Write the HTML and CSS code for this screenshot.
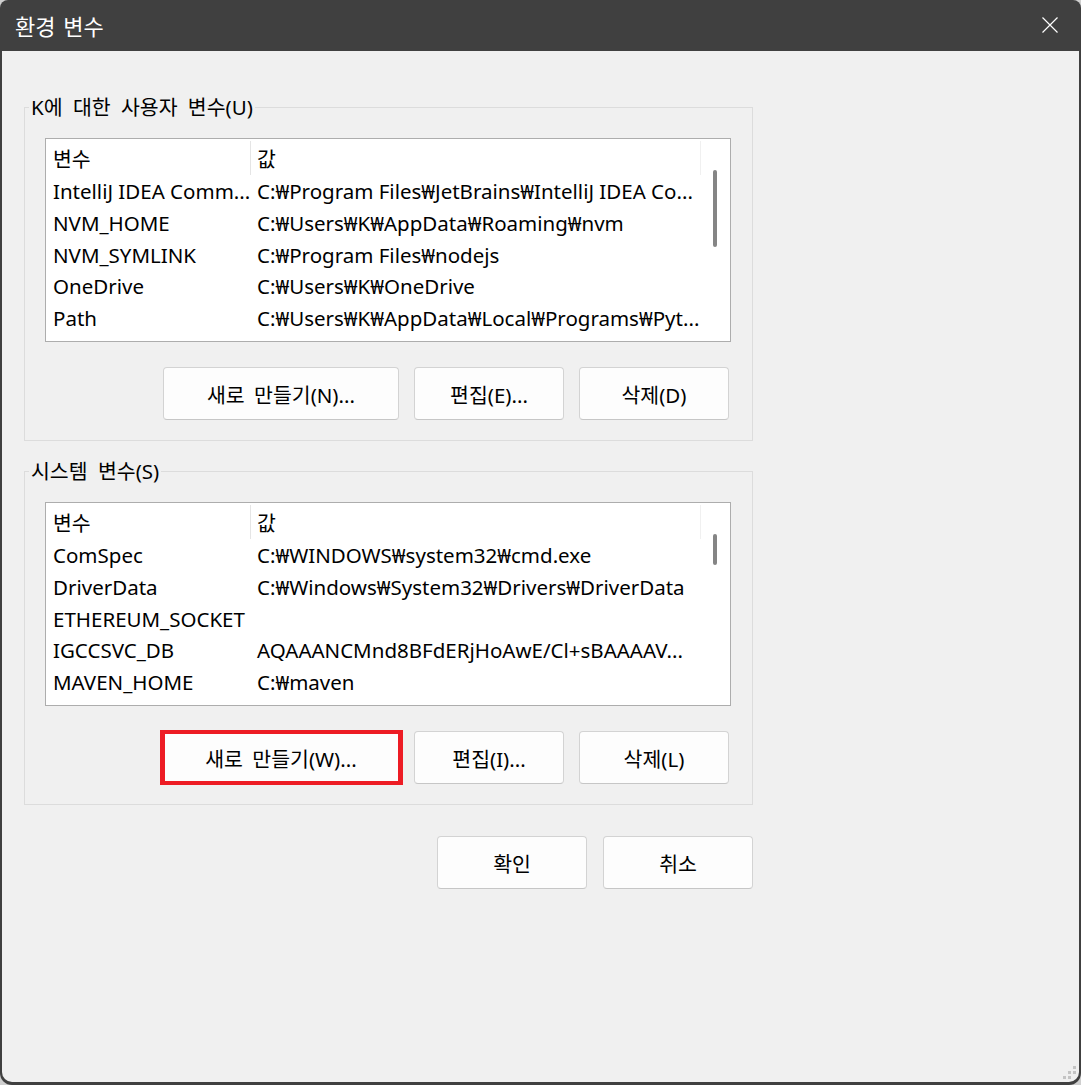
FILE: index.html
```html
<!DOCTYPE html>
<html lang="ko">
<head>
<meta charset="utf-8">
<title>환경 변수</title>
<link rel="stylesheet" href="styles.css">
</head>
<body>
<div class="window">
  <div class="titlebar">
    <span class="title">환경 변수</span>
    <span class="close">
      <svg width="16" height="16" viewBox="0 0 16 16"><path d="M0.5 0.5 L15.5 15.5 M15.5 0.5 L0.5 15.5" stroke="#ffffff" stroke-width="1.2" fill="none"/></svg>
    </span>
  </div>
  <div class="content">
    <fieldset class="group">
      <legend>K에 대한 사용자 변수(U)</legend>
      <div class="listbox">
        <div class="table">
          <div class="row head"><div class="c1">변수</div><div class="c2">값</div></div>
          <div class="row"><div class="c1">IntelliJ IDEA Comm...</div><div class="c2">C:₩Program Files₩JetBrains₩IntelliJ IDEA Co...</div></div>
          <div class="row"><div class="c1">NVM_HOME</div><div class="c2">C:₩Users₩K₩AppData₩Roaming₩nvm</div></div>
          <div class="row"><div class="c1">NVM_SYMLINK</div><div class="c2">C:₩Program Files₩nodejs</div></div>
          <div class="row"><div class="c1">OneDrive</div><div class="c2">C:₩Users₩K₩OneDrive</div></div>
          <div class="row"><div class="c1">Path</div><div class="c2">C:₩Users₩K₩AppData₩Local₩Programs₩Pyt...</div></div>
        </div>
        <div class="scrollbar"><div class="thumb thumb-user"></div></div>
      </div>
      <div class="buttons">
        <button class="btn btn-wide">새로 만들기(N)...</button>
        <button class="btn">편집(E)...</button>
        <button class="btn">삭제(D)</button>
      </div>
    </fieldset>

    <fieldset class="group group-system">
      <legend>시스템 변수(S)</legend>
      <div class="listbox">
        <div class="table">
          <div class="row head"><div class="c1">변수</div><div class="c2">값</div></div>
          <div class="row"><div class="c1">ComSpec</div><div class="c2">C:₩WINDOWS₩system32₩cmd.exe</div></div>
          <div class="row"><div class="c1">DriverData</div><div class="c2">C:₩Windows₩System32₩Drivers₩DriverData</div></div>
          <div class="row"><div class="c1">ETHEREUM_SOCKET</div><div class="c2"></div></div>
          <div class="row"><div class="c1">IGCCSVC_DB</div><div class="c2">AQAAANCMnd8BFdERjHoAwE/Cl+sBAAAAV...</div></div>
          <div class="row"><div class="c1">MAVEN_HOME</div><div class="c2">C:₩maven</div></div>
        </div>
        <div class="scrollbar"><div class="thumb thumb-system"></div></div>
      </div>
      <div class="buttons">
        <button class="btn btn-wide btn-marked">새로 만들기(W)...</button>
        <button class="btn">편집(I)...</button>
        <button class="btn">삭제(L)</button>
      </div>
    </fieldset>

    <div class="dialog-buttons">
      <button class="btn">확인</button>
      <button class="btn">취소</button>
    </div>

    <svg class="grip" width="14" height="14" viewBox="0 0 14 14">
      <rect x="10" y="0" width="3" height="3" fill="#c4c4c4"/>
      <rect x="5" y="5" width="3" height="3" fill="#c4c4c4"/>
      <rect x="10" y="5" width="3" height="3" fill="#c4c4c4"/>
      <rect x="0" y="10" width="3" height="3" fill="#c4c4c4"/>
      <rect x="5" y="10" width="3" height="3" fill="#c4c4c4"/>
    </svg>
  </div>
</div>
</body>
</html>
```

FILE: styles.css
```css
* { box-sizing: border-box; }

html, body {
  margin: 0;
  padding: 0;
  background: #cfcfcf;
}

body {
  font-family: "Noto Sans", "Noto Sans CJK KR", sans-serif;
  font-size: 20.5px;
  color: #000;
}

.window {
  width: 1081px;
  height: 1085px;
  background: #404040;
  border-radius: 8px 8px 12px 12px;
  display: flex;
  flex-direction: column;
  overflow: hidden;
}

.titlebar {
  height: 51px;
  flex: none;
  display: flex;
  align-items: center;
  justify-content: space-between;
  padding: 0 23px 0 15px;
  color: #fff;
}

.title {
  font-size: 22px;
  line-height: 26px;
  word-spacing: 2px;
}

.close {
  display: flex;
  margin-top: -1px;
}

.content {
  flex: 1;
  margin: 0 2px 3px 2px;
  background: #f0f0f0;
  border-radius: 0 0 10px 10px;
  padding: 44px 0 0 22px;
  position: relative;
}

.group {
  margin: 0;
  width: 729px;
  min-width: 0;
  border: 1px solid #dcdcdc;
  padding: 19px 21px 20px 20px;
}

.group-system {
  margin-top: 18px;
}

.group legend {
  margin-left: -16px;
  padding: 0 2px;
  line-height: 24px;
  font-size: 20.5px;
  word-spacing: 5px;
}

.listbox {
  width: 686px;
  height: 204px;
  border: 1px solid #adadad;
  background: #fff;
  display: flex;
}

.table {
  width: 655px;
  flex: none;
}

.row {
  display: flex;
  height: 31.8px;
  line-height: 32px;
  white-space: nowrap;
}

.row.head {
  height: 36px;
  line-height: 36px;
  padding-top: 2px;
}

.c1 {
  width: 205px;
  flex: none;
  padding-left: 7px;
}

.c2 {
  flex: 1;
  padding-left: 6px;
  overflow: hidden;
}

.head .c1 {
  border-right: 1px solid #e5e5e5;
}

.head .c2 {
  border-right: 1px solid #f0f0f0;
}

.scrollbar {
  flex: 1;
  padding-left: 12px;
}

.thumb {
  width: 4px;
  border-radius: 2px;
  background: #858585;
  margin-top: 31px;
}

.thumb-user { height: 77px; }
.thumb-system { height: 31px; }

.buttons {
  display: flex;
  justify-content: flex-end;
  gap: 15px;
  margin-top: 25px;
  padding-right: 2px;
}

.btn {
  width: 150px;
  height: 53px;
  border: 1px solid #d3d3d3;
  border-bottom-color: #c6c6c6;
  border-radius: 4px;
  background: #fdfdfd;
  font-family: inherit;
  font-size: 20.5px;
  word-spacing: 4px;
  color: #000;
  padding: 0;
  position: relative;
}

.btn-wide { width: 236px; }

.btn-marked::after {
  content: "";
  position: absolute;
  top: -2px;
  bottom: -2px;
  left: -4px;
  right: -5px;
  border: solid #ed1c24;
  border-width: 4px 5px;
}

.dialog-buttons {
  width: 729px;
  display: flex;
  justify-content: flex-end;
  gap: 16px;
  margin-top: 31px;
}

.grip {
  position: absolute;
  right: 2px;
  bottom: 2px;
}
```
